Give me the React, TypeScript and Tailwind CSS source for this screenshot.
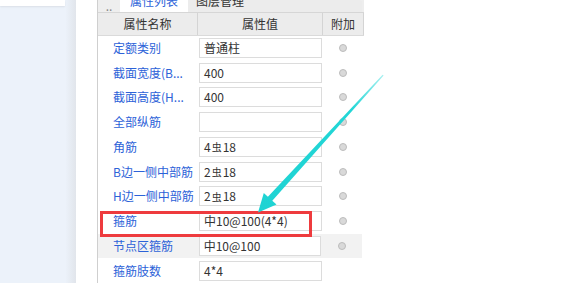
import React from "react";

const font = { fontFamily: '"Noto Sans CJK SC", "Noto Sans", sans-serif' };

type Row = { name: string; value: React.ReactNode; radio: boolean; shaded?: boolean };

function Bar400({ n, d }: { n: string; d: string }) {
  return (
    <>
      {n}
      <span className="text-[10px] align-[2px] mx-[1px]">虫</span>
      {d}
    </>
  );
}

const rows: Row[] = [
  { name: "定额类别", value: "普通柱", radio: true },
  { name: "截面宽度(B...", value: "400", radio: true },
  { name: "截面高度(H...", value: "400", radio: true },
  { name: "全部纵筋", value: "", radio: true },
  { name: "角筋", value: <Bar400 n="4" d="18" />, radio: true },
  { name: "B边一侧中部筋", value: <Bar400 n="2" d="18" />, radio: true },
  { name: "H边一侧中部筋", value: <Bar400 n="2" d="18" />, radio: true },
  { name: "箍筋", value: "中10@100(4*4)", radio: true },
  { name: "节点区箍筋", value: "中10@100", radio: true, shaded: true },
  { name: "箍筋肢数", value: "4*4", radio: false },
];

export default function App() {
  return (
    <div className="relative w-[585px] h-[283px] overflow-hidden bg-white" style={font}>
      <div className="flex h-full">
        {/* side area */}
        <div className="flex w-[76px] h-full">
          <div className="w-[66px] h-full bg-[#ecf2fa]">
            <div className="w-[65px] h-[6px] bg-white shadow-[0_1px_2px_rgba(0,0,0,0.08)]" />
          </div>
          <div className="w-[10px] h-full bg-gradient-to-r from-[#ebf1f9] to-[#e1e5eb]" />
        </div>
        <div className="w-[21px] h-full bg-white" />

        {/* property panel */}
        <div className="w-[267px] h-full border-l border-[#cfcfcf] flex flex-col">
          <div className="flex h-[13px] bg-[#eeeeee] border-b border-[#d6d6d6] overflow-hidden text-[12px]">
            <div className="w-[22px] flex items-end justify-center pb-[1px] text-[#888] leading-none">
              <span className="-mb-[1px]">..</span>
            </div>
            <div className="w-[68px] bg-white flex justify-center">
              <span className="block leading-[12px] -mt-[5px] text-[#2c62d8]">属性列表</span>
            </div>
            <div className="flex-1 bg-[#ececec] flex pl-[8px] rounded-tr-[3px] mr-[2px]">
              <span className="block leading-[12px] -mt-[5px] text-[#333]">图层管理</span>
            </div>
          </div>

          <div className="flex h-[23px] bg-[#ececec] border-b border-[#dadada] text-[12px] text-[#333]">
            <div className="w-[100px] flex items-center justify-center border-r border-[#d4d4d4]">属性名称</div>
            <div className="w-[125px] flex items-center justify-center border-r border-[#d4d4d4]">属性值</div>
            <div className="w-[41px] flex items-center justify-center border-r border-[#d4d4d4]">附加</div>
          </div>

          {rows.map((r) => (
            <div
              key={r.name}
              className={`flex h-[25px] items-center text-[12px] ${r.shaded ? "bg-[#f2f2f2] mr-[2px]" : ""}`}
            >
              <div className="w-[101px] pl-[15px] text-[#2c62d8] whitespace-nowrap overflow-hidden">{r.name}</div>
              <div className="w-[123px] h-[20px] bg-white border border-[#dcdcdc] px-[4px] flex items-center text-[#333] whitespace-nowrap">
                {r.value}
              </div>
              <div className="w-[41px] flex items-center justify-center">
                {r.radio && (
                  <span className="block w-[8px] h-[8px] rounded-full bg-[#d9d9d9] border border-[#bcbcbc]" />
                )}
              </div>
            </div>
          ))}
        </div>
        <div className="flex-1 bg-white" />
      </div>

      {/* red highlight */}
      <div className="absolute left-[100px] top-[211px] w-[212px] h-[26px] border-[3px] border-[#ee3b3e]" />

      {/* cyan arrow */}
      <svg className="absolute left-0 top-0" width="585" height="283" viewBox="0 0 585 283">
        <defs>
          <linearGradient id="ar" x1="383" y1="75" x2="258" y2="212" gradientUnits="userSpaceOnUse">
            <stop offset="0" stopColor="#a8f0f0" />
            <stop offset="0.25" stopColor="#22d6d6" />
            <stop offset="1" stopColor="#1fd3d3" />
          </linearGradient>
        </defs>
        <polygon
          points="382.6,74.7 383.6,75.5 272.3,200.7 276.5,204.5 258,212.5 263.8,192.9 267.9,196.7"
          fill="url(#ar)"
        />
      </svg>
    </div>
  );
}
